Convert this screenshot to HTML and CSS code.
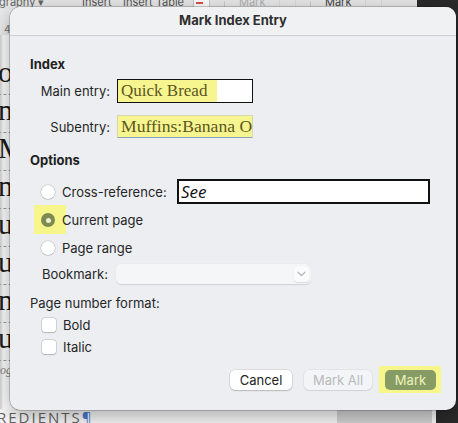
FILE: index.html
```html
<!DOCTYPE html>
<html>
<head>
<meta charset="utf-8">
<link rel="stylesheet" href="styles.css">
</head>
<body>
<div class="screen">
  <div class="toolbar">
    <div class="tb-light">
      <span class="tb-item tb-graphy">graphy ▾</span>
      <span class="tb-item tb-insert">Insert</span>
      <span class="tb-item tb-table">Insert Table</span>
      <span class="tb-icon tb-red"><i></i></span>
      <span class="tb-sep"></span>
      <span class="tb-item tb-faded tb-mark1">Mark</span>
      <span class="tb-icon tb-faint"></span>
      <span class="tb-sep"></span>
      <span class="tb-item tb-mark2">Mark</span>
      <span class="tb-icon tb-faint"></span>
    </div>
    <div class="tb-dark"></div>
  </div>
  <div class="workspace">
    <div class="doc">
      <div class="ruler"><span>4</span></div>
      <div class="doc-lines">
        <div class="dl">o</div>
        <div class="dl">n</div>
        <div class="dl">M</div>
        <div class="dl">n</div>
        <div class="dl">u</div>
        <div class="dl">u</div>
        <div class="dl">n</div>
        <div class="dl">u</div>
        <div class="dl-small">og</div>
      </div>
      <div class="doc-foot">
        <span class="ingr">REDIENTS<b>¶</b></span>
        <span class="foot-panel"></span>
      </div>
    </div>
    <div class="side-dark"></div>
  </div>

  <div class="dialog">
    <div class="titlebar">Mark Index Entry</div>
    <div class="dbody">
      <div class="heading h-index">Index</div>
      <div class="field-row">
        <span class="flabel">Main entry:</span>
        <div class="textbox main"><span class="hl-text">Quick Bread</span></div>
      </div>
      <div class="field-row sub-row">
        <span class="flabel">Subentry:</span>
        <div class="textbox sub"><span>Muffins:Banana Oat</span></div>
      </div>

      <div class="heading h-options">Options</div>
      <div class="opt-row cross-row">
        <span class="radio"></span>
        <span class="opt-label cross-label">Cross-reference:</span>
        <div class="textbox see">See</div>
      </div>
      <div class="opt-row">
        <span class="radio-hl"></span>
        <span class="radio on"></span>
        <span class="opt-label">Current page</span>
      </div>
      <div class="opt-row">
        <span class="radio"></span>
        <span class="opt-label">Page range</span>
      </div>
      <div class="bm-row">
        <span class="bm-label">Bookmark:</span>
        <div class="select">
          <span class="chev"><svg width="9" height="6" viewBox="0 0 9 6"><path d="M1 1.2 L4.5 4.6 L8 1.2" fill="none" stroke="#b9bcc1" stroke-width="1.4" stroke-linecap="round" stroke-linejoin="round"/></svg></span>
        </div>
      </div>

      <div class="pnf">Page number format:</div>
      <div class="check-row"><span class="check"></span><span class="opt-label">Bold</span></div>
      <div class="check-row"><span class="check"></span><span class="opt-label">Italic</span></div>

      <div class="buttons">
        <span class="btn cancel">Cancel</span>
        <span class="btn disabled">Mark All</span>
        <span class="btn-hl"><span class="btn primary">Mark</span></span>
      </div>
    </div>
  </div>
</div>
</body>
</html>
```

FILE: styles.css
```css
* { box-sizing: border-box; }
html, body { margin: 0; padding: 0; }
body {
  width: 458px;
  height: 423px;
  overflow: hidden;
  font-family: "Inter", "Noto Sans", sans-serif;
}
.screen {
  position: relative;
  width: 458px;
  height: 423px;
  overflow: hidden;
  background: #f4f4f4;
  display: flex;
  flex-direction: column;
}

/* ---------- background Word window ---------- */
.toolbar {
  display: flex;
  height: 9px;
  flex: none;
}
.tb-light {
  width: 417px;
  background: #e9e9e9;
  display: flex;
  align-items: flex-end;
  overflow: hidden;
  font-size: 11px;
  color: #555;
}
.tb-dark { flex: 1; background: #2b2b2b; }
.tb-item { line-height: 12px; margin-bottom: 1px; white-space: nowrap; }
.tb-graphy { margin-left: -1px; width: 83px; color: #666; }
.tb-insert { width: 41px; }
.tb-table { width: 70px; }
.tb-icon { width: 17px; height: 9px; margin-bottom: 1px; flex: none; }
.tb-red { border: 1px solid #c9c9c9; border-top: none; background: #fff; position: relative; }
.tb-red i { position: absolute; left: 2px; top: 3px; width: 7px; height: 2px; background: #d9534f; }
.tb-sep { width: 1px; height: 8px; background: #cfcfcf; margin: 0 14px 0 14px; }
.tb-faded { color: #b4b4b4; }
.tb-mark1 { width: 40px; }
.tb-mark2 { width: 40px; color: #444; }
.tb-faint { border: 1px solid #dcdcdc; border-top: none; }

.workspace { flex: 1; display: flex; }
.doc { flex: 1; display: flex; flex-direction: column; background: #ffffff; }
.side-dark { width: 22px; background: #2b2b2b; }
.ruler {
  height: 26px;
  background: #ececec;
  font-size: 10px;
  color: #777;
  padding: 14px 0 0 4px;
}
.doc-lines {
  flex: 1;
  display: flex;
  flex-direction: column;
  padding-top: 22px;
  background: linear-gradient(to right, #d6d6d6 0, #e8e8e8 2px, #ffffff 3px);
}
.dl {
  font-family: "Liberation Serif", serif;
  font-size: 30px;
  line-height: 30px;
  height: 38px;
  color: #1e1e1e;
  margin-left: -2px;
  border-bottom: 1px dashed #9a9a9a;
  width: 30px;
}
.dl-small {
  font-family: "Liberation Serif", serif;
  font-style: italic;
  font-size: 12px;
  color: #888;
  margin-top: 2px;
}
.doc-foot {
  height: 14px;
  display: flex;
  background: #fbfbfb;
}
.ingr {
  width: 340px;
  font-family: "Open Sans", sans-serif;
  font-size: 15px;
  line-height: 15px;
  letter-spacing: 2px;
  color: #666;
  margin-left: -3px;
  padding-top: 1px;
}
.ingr b { color: #4a7bd0; font-weight: normal; }
.foot-panel { width: 95px; background: #d6d6d6; }

/* ---------- dialog ---------- */
.dialog {
  position: absolute;
  left: 10px;
  top: 7px;
  width: 446px;
  height: 403px;
  border-radius: 10px;
  background: #eceef1;
  box-shadow: 0 0 0 0.5px rgba(0,0,0,0.35), 0 6px 22px rgba(0,0,0,0.35);
  overflow: hidden;
  display: flex;
  flex-direction: column;
  color: #262626;
  font-size: 13px;
}
.titlebar {
  height: 29px;
  flex: none;
  background: #f0f1f3;
  border-bottom: 1px solid #cdd0d4;
  text-align: center;
  font-weight: 700;
  font-size: 13px;
  line-height: 27px;
  color: #2f2f2f;
}
.dbody {
  flex: 1;
  display: flex;
  flex-direction: column;
  padding: 20px 15px 0 20px;
}
.heading {
  font-weight: 700;
  font-size: 13px;
  line-height: 16px;
  height: 16px;
  color: #222;
}
.field-row {
  display: flex;
  align-items: center;
  height: 24px;
  margin-top: 7px;
}
.sub-row { margin-top: 12px; height: 23px; }
.flabel {
  width: 80px;
  text-align: right;
  margin-right: 7px;
  white-space: nowrap;
}
.textbox {
  height: 100%;
  background: #fff;
  overflow: hidden;
  white-space: nowrap;
  display: flex;
  align-items: stretch;
}
.main {
  width: 136px;
  border: 1px solid #111;
}
.hl-text, .sub span {
  font-family: "Liberation Serif", serif;
  font-size: 17px;
  line-height: 22px;
  color: #5c5722;
}
.hl-text {
  background: #f7f590;
  padding: 0 10px 0 3px;
}
.sub {
  width: 136px;
  background: #f7f590;
  border: 1px solid #d8d8b0;
  border-bottom: 1px solid #8fa3b6;
  padding-left: 3px;
}
.sub span { line-height: 21px; font-size: 17.6px; }

.h-options { margin-top: 14px; }
.opt-row {
  position: relative;
  display: flex;
  align-items: center;
  height: 28px;
  padding-left: 11px;
}
.cross-row { height: 25px; margin-top: 11px; margin-bottom: 2px; }
.radio {
  position: relative;
  width: 14px;
  height: 14px;
  border-radius: 50%;
  background: #fff;
  box-shadow: 0 0 0 0.5px rgba(0,0,0,0.18), 0 0.5px 1.5px rgba(0,0,0,0.18);
  flex: none;
}
.radio.on {
  background: #7d8a52;
  box-shadow: none;
}
.radio.on::after {
  content: "";
  position: absolute;
  left: 4.5px;
  top: 4.5px;
  width: 5px;
  height: 5px;
  border-radius: 50%;
  background: #eef0d0;
}
.radio-hl {
  position: absolute;
  left: 4px;
  top: -1px;
  width: 32px;
  height: 29px;
  background: #f6f68a;
}
.opt-label {
  position: relative;
  margin-left: 7px;
  white-space: nowrap;
}
.cross-label { width: 115px; }
.see {
  width: 253px;
  border: 2px solid #111;
  font-family: "Open Sans", sans-serif;
  font-style: italic;
  font-size: 17px;
  line-height: 21px;
  color: #111;
  padding-left: 2px;
}
.bm-row {
  display: flex;
  align-items: center;
  height: 20px;
  margin-top: 2px;
  padding-left: 12px;
}
.bm-label { width: 74px; }
.select {
  width: 195px;
  height: 20px;
  border-radius: 5px;
  background: #f5f6f8;
  box-shadow: 0 0.5px 1px rgba(0,0,0,0.12);
  display: flex;
  justify-content: flex-end;
  align-items: center;
  padding-right: 2px;
}
.chev {
  width: 15px;
  height: 16px;
  border-radius: 4px;
  background: #fbfbfc;
  box-shadow: 0 0.5px 1px rgba(0,0,0,0.12);
  display: flex;
  align-items: center;
  justify-content: center;
}
.pnf {
  margin-top: 11px;
  line-height: 16px;
  height: 16px;
}
.check-row {
  display: flex;
  align-items: center;
  height: 22px;
  padding-left: 12px;
}
.pnf + .check-row { margin-top: 3px; }
.check {
  width: 14px;
  height: 14px;
  border-radius: 3px;
  background: #fff;
  box-shadow: 0 0 0 0.5px rgba(0,0,0,0.18), 0 0.5px 1.5px rgba(0,0,0,0.18);
  flex: none;
}
.buttons {
  display: flex;
  justify-content: flex-end;
  align-items: center;
  margin-top: 8px;
}
.btn {
  height: 20px;
  border-radius: 5px;
  font-size: 13px;
  line-height: 20px;
  text-align: center;
  flex: none;
}
.cancel {
  width: 62px;
  background: #fff;
  color: #222;
  box-shadow: 0 0 0 0.5px rgba(0,0,0,0.14), 0 1px 1.5px rgba(0,0,0,0.16);
  margin-right: 12px;
}
.disabled {
  width: 68px;
  background: #f3f4f6;
  color: #b8babd;
  box-shadow: 0 0 0 0.5px rgba(0,0,0,0.08), 0 1px 1px rgba(0,0,0,0.08);
  margin-right: 7px;
}
.btn-hl {
  background: #f6f68a;
  padding: 4px 5px 3px 6px;
  display: flex;
}
.primary {
  width: 51px;
  background: #879b65;
  color: #eef3b8;
}
```
